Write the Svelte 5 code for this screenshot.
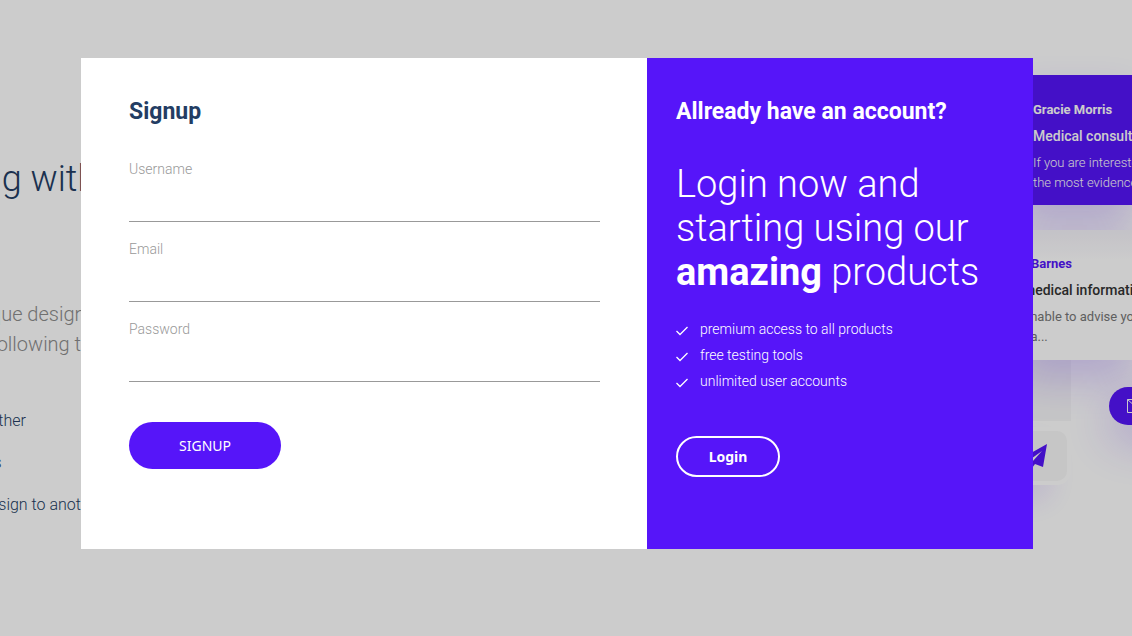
<script>
  let username = $state('');
  let email = $state('');
  let password = $state('');

  const perks = [
    'premium access to all products',
    'free testing tools',
    'unlimited user accounts'
  ];
</script>

<div class="page">
  <div class="backdrop" aria-hidden="true">
    <section class="intro">
      <h1>ng with</h1>
      <p class="lead">que design<br />following the</p>
      <ul class="points">
        <li>ether</li>
        <li>is</li>
        <li>esign to another</li>
      </ul>
    </section>

    <section class="preview">
      <article class="card featured">
        <h3>Gracie Morris</h3>
        <h4>Medical consultation</h4>
        <p>If you are interested<br />the most evidence</p>
      </article>
      <article class="card plain">
        <h3>A Barnes</h3>
        <h4>medical information</h4>
        <p>unable to advise you<br />ita...</p>
      </article>
      <div class="tools">
        <div class="stack">
          <div class="panel"></div>
          <div class="send">
            <svg viewBox="0 0 26 26" width="26" height="26">
              <path d="M25 1 0 15l6 3L20 8 10 19v6l3-4 8 3z" fill="#5615f9" />
            </svg>
          </div>
        </div>
        <div class="mail">
          <svg viewBox="0 0 18 14" width="18" height="14" fill="none" stroke="#fff">
            <path d="M.5.500h17v13H.5zM.5.500 9 8l8.500-7.500" />
          </svg>
        </div>
      </div>
    </section>
  </div>

  <div class="scrim">
    <main class="dialog">
      <form class="signup" onsubmit={(e) => e.preventDefault()}>
        <h2>Signup</h2>
        <div class="field">
          <label for="username">Username</label>
          <input id="username" type="text" bind:value={username} />
        </div>
        <div class="field">
          <label for="email">Email</label>
          <input id="email" type="email" bind:value={email} />
        </div>
        <div class="field">
          <label for="password">Password</label>
          <input id="password" type="password" bind:value={password} />
        </div>
        <button class="submit" type="submit">SIGNUP</button>
      </form>

      <section class="login">
        <h2>Allready have an account?</h2>
        <p class="pitch">Login now and starting using our <strong>amazing</strong> products</p>
        <ul class="perks">
          {#each perks as perk}
            <li>
              <svg viewBox="0 0 12 14" width="12" height="14" fill="none" stroke="#fff" stroke-width="1.3">
                <path d="M.5 9 4 12.500 11.500 5" />
              </svg>
              {perk}
            </li>
          {/each}
        </ul>
        <button class="enter" type="button">Login</button>
      </section>
    </main>
  </div>
</div>

<style>
  :global(body) {
    margin: 0;
  }

  .page {
    position: relative;
    min-height: 100vh;
    overflow: hidden;
    background: #fff;
    font-family: Roboto, sans-serif;
    color: #233d63;
  }

  .page * {
    box-sizing: border-box;
  }

  h1, h2, h3, h4, p, ul {
    margin: 0;
    padding: 0;
  }

  ul {
    list-style: none;
  }

  .backdrop {
    position: absolute;
    inset: 0;
    display: flex;
    justify-content: space-between;
    white-space: nowrap;
    overflow: hidden;
  }

  .intro {
    padding-top: 156px;
    margin-left: -10px;
  }

  .intro h1 {
    margin-left: -8px;
    font-size: 36px;
    line-height: 46px;
    font-weight: 300;
  }

  .lead {
    margin-top: 97px;
    font-size: 20px;
    line-height: 30px;
    font-weight: 300;
    color: #8c8c8c;
  }

  .points {
    margin-top: 41px;
    font-size: 16px;
    line-height: 42px;
    font-weight: 300;
  }

  .preview {
    display: flex;
    flex-direction: column;
    width: 115px;
    padding-top: 75px;
  }

  .card {
    position: relative;
    flex: none;
    height: 130px;
    padding-top: 25px;
    box-shadow: 0 20px 40px rgba(86, 21, 249, 0.2);
  }

  .featured {
    padding-left: 16px;
    background: #5615f9;
    color: #fff;
  }

  .plain {
    margin-top: 25px;
    padding-top: 24px;
    padding-left: 2px;
    background: linear-gradient(#f5f3fa, #fff 30px);
    color: #777;
  }

  .card h3 {
    font-size: 13px;
    line-height: 20px;
    font-weight: 700;
  }

  .plain h3 {
    color: #5615f9;
  }

  .card h4 {
    margin: 6px 0 7px;
    font-size: 14px;
    line-height: 20px;
    font-weight: 500;
  }

  .plain h4 {
    color: #333;
  }

  .card p {
    font-size: 13px;
    line-height: 20px;
    font-weight: 300;
  }

  .plain h4,
  .plain p {
    padding-left: 4px;
  }

  .plain p {
    font-weight: 400;
  }

  .tools {
    display: flex;
    gap: 38px;
  }

  .stack {
    flex: none;
    width: 54px;
  }

  .panel {
    height: 61px;
    background: rgba(60, 60, 80, 0.04);
  }

  .send {
    display: flex;
    align-items: center;
    justify-content: flex-start;
    height: 58px;
    margin-top: 6px;
    padding-left: 5px;
    border: 4px solid #fff;
    border-left: 0;
    border-radius: 0 14px 14px 0;
    background: #f8f8f8;
    box-shadow: -20px 16px 26px rgba(86, 21, 249, 0.1);
  }

  .mail {
    display: flex;
    flex: none;
    align-items: center;
    width: 120px;
    height: 38px;
    margin-top: 27px;
    padding-left: 18px;
    border-radius: 19px;
    background: #5615f9;
    box-shadow: 0 16px 46px rgba(86, 21, 249, 0.24);
  }

  .scrim {
    position: relative;
    min-height: 100vh;
    padding: 58px 99px 58px 81px;
    box-sizing: border-box;
    background: rgba(0, 0, 0, 0.2);
  }

  .dialog {
    display: grid;
    grid-template-columns: minmax(0, 566fr) minmax(0, 386fr);
    background: #fff;
  }

  h2 {
    font-size: 23px;
    line-height: 30px;
    font-weight: 700;
  }

  .signup {
    padding: 39px 47px 80px 48px;
  }

  .signup h2 {
    margin-bottom: 30px;
  }

  .field {
    height: 80px;
  }

  .field label {
    display: block;
    font-size: 14px;
    line-height: 24px;
    font-weight: 300;
    color: #999;
  }

  .field input {
    display: block;
    width: 100%;
    height: 41px;
    padding: 0;
    border: 0;
    border-bottom: 1px solid #999;
    outline: 0;
    background: transparent;
    font: 14px Roboto, sans-serif;
  }

  .submit {
    display: block;
    width: 152px;
    height: 47px;
    margin-top: 25px;
    border: 0;
    border-radius: 24px;
    background: #5615f9;
    color: #fff;
    font: 14px "Noto Sans", sans-serif;
  }

  .login {
    padding: 39px 29px 72px;
    background: #5615f9;
    color: #fff;
  }

  .pitch {
    margin-top: 35px;
    font-size: 38px;
    line-height: 44px;
    font-weight: 300;
  }

  .pitch strong {
    font-weight: 700;
  }

  .perks {
    margin-top: 22px;
    font-size: 14px;
    line-height: 26px;
    font-weight: 300;
  }

  .perks li {
    display: flex;
    align-items: center;
    gap: 12px;
  }

  .enter {
    display: block;
    width: 104px;
    height: 41px;
    margin-top: 42px;
    border: 2px solid #fff;
    border-radius: 21px;
    background: transparent;
    color: #fff;
    font: bold 14px "Noto Sans", sans-serif;
  }
</style>
